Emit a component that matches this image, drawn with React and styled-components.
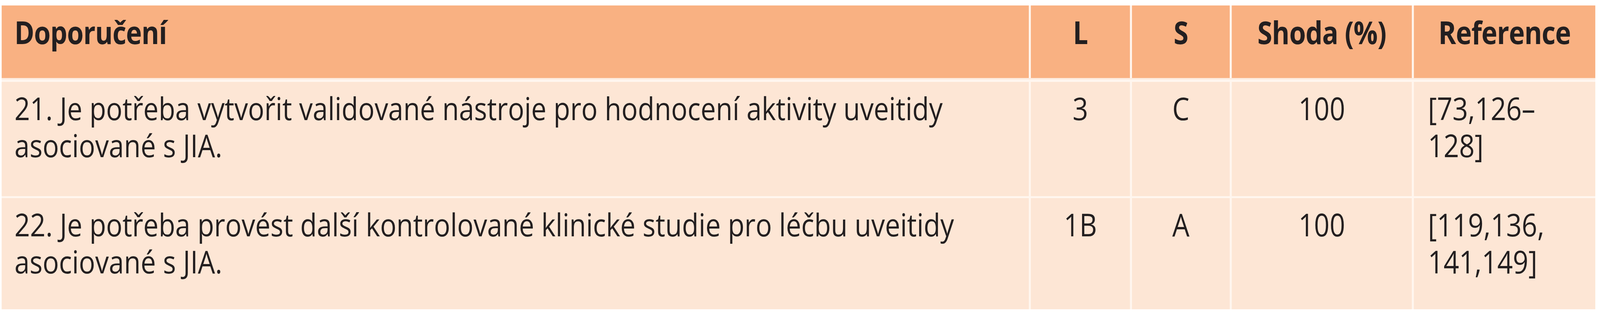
import styled, { createGlobalStyle } from "styled-components";

const GlobalStyle = createGlobalStyle`
  html, body {
    margin: 0;
    padding: 0;
    background: #ffffff;
    overflow: hidden;
  }
  body {
    font-family: "Open Sans", "Noto Sans", sans-serif;
    color: #231f20;
  }
`;

// table is laid out at the reference's 4762px geometry; the browser window
// is only 4096px wide, so it gets squeezed horizontally to fit
const FIT = 4096 / 4762;

const columns = "3057px 295px 291px 536px 540px";

const rows = [
  {
    text: "21. Je potřeba vytvořit validované nástroje pro hodnocení aktivity uveitidy asociované s JIA.",
    level: "3",
    strength: "C",
    agree: "100",
    refs: "[73,126–128]",
    height: 293,
  },
  {
    text: "22. Je potřeba provést další kontrolované klinické studie pro léčbu uveitidy asociované s JIA.",
    level: "1B",
    strength: "A",
    agree: "100",
    refs: "[119,136,\u200B141,149]",
    height: 285,
  },
];

function App() {
  return (
    <>
      <GlobalStyle />
      <Page>
        <Table>
          <HeaderRow>
            <HeadCell>Doporučení</HeadCell>
            <HeadCell $center>L</HeadCell>
            <HeadCell $center>S</HeadCell>
            <HeadCell $center>Shoda (%)</HeadCell>
            <HeadCell $center>Reference</HeadCell>
          </HeaderRow>

          {rows.map((r) => (
            <BodyRow key={r.text} $height={r.height}>
              <Cell $pad="38px">{r.text}</Cell>
              <Cell $center>{r.level}</Cell>
              <Cell $center>{r.strength}</Cell>
              <Cell $center>{r.agree}</Cell>
              <Cell $pad="42px">{r.refs}</Cell>
            </BodyRow>
          ))}
        </Table>
      </Page>
    </>
  );
}

export default App;

const Page = styled.div`
  width: 4762px;
  height: 800px;
  padding: 14px 0 7px 5px;
  box-sizing: border-box;
  transform: scaleX(${FIT});
  transform-origin: 0 0;
`;

const Table = styled.div`
  width: 4743px;
  display: flex;
  flex-direction: column;
  gap: 5px;
  background: #fff6ef;
`;

const HeaderRow = styled.div`
  display: grid;
  grid-template-columns: ${columns};
  column-gap: 6px;
  height: 186px;
  margin-bottom: 5px;
  box-shadow: 0 4px 0 #fdebdf;
`;

const BodyRow = styled.div`
  display: grid;
  grid-template-columns: ${columns};
  column-gap: 6px;
  height: ${(p) => p.$height}px;
`;

const HeadCell = styled.div`
  background: #f9b182;
  font-weight: 700;
  font-size: 80px;
  line-height: 95px;
  letter-spacing: -1px;
  padding: 20px 38px 0;
  text-align: ${(p) => (p.$center ? "center" : "left")};
  white-space: nowrap;
`;

const Cell = styled.div`
  background: #fde6d5;
  font-size: 81px;
  line-height: 95px;
  padding: 19px ${(p) => p.$pad || "20px"} 0;
  text-align: ${(p) => (p.$center ? "center" : "left")};
`;
